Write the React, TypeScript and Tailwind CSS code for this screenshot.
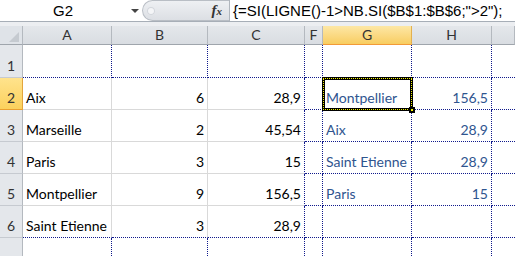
import React from "react";

const cols = ["A", "B", "C", "F", "G", "H", ""];

const data: string[][] = [
  ["", "", "", "", "", "", ""],
  ["Aix", "6", "28,9", "", "Montpellier", "156,5", ""],
  ["Marseille", "2", "45,54", "", "Aix", "28,9", ""],
  ["Paris", "3", "15", "", "Saint Etienne", "28,9", ""],
  ["Montpellier", "9", "156,5", "", "Paris", "15", ""],
  ["Saint Etienne", "3", "28,9", "", "", "", ""],
  ["", "", "", "", "", "", ""],
];

const numeric = [1, 2, 5];

function cellBorders(row: number, col: number) {
  // dotted navy lines: page-break style borders around the blocks
  const dotRight = col >= 2 || row === 1 || row === 7;
  const dotBottom = col >= 3 || row === 1 || row === 6;
  const right =
    col === 6
      ? ""
      : dotRight
        ? "border-r border-r-[#101a8c] [border-right-style:dotted]"
        : "border-r border-r-[#d9d9d9]";
  const bottom =
    row === 7
      ? ""
      : dotBottom
        ? "border-b border-b-[#101a8c] [border-bottom-style:dotted]"
        : "border-b border-b-[#d9d9d9]";
  return `${right} ${bottom}`;
}

function FormulaBar() {
  return (
    <div className="flex h-[22px] border-b border-[#a7aeb7] bg-white font-['Liberation_Sans',Arial,sans-serif]">
      <div className="flex w-[142px] items-center">
        <span className="w-[126px] text-center text-[15px] leading-none text-black">
          G2
        </span>
        <span className="ml-[5px] h-0 w-0 border-x-[4px] border-t-[4px] border-x-transparent border-t-[#444]" />
      </div>
      <div className="flex w-[87px] items-center bg-white">
        <div className="flex h-[21px] flex-1 items-center rounded-l-full border border-r-0 border-[#b9bec5] bg-gradient-to-b from-[#eef0f3] to-[#dcdfe4] pl-[4px]">
          <span className="h-[8px] w-[8px] rounded-full bg-[#f4f5f7] shadow-[inset_0_0_0_1px_#d2d6db]" />
          <span className="ml-auto mr-[7px] font-['Liberation_Serif',serif] text-[15px] font-bold italic leading-none text-[#333]">
            f<span className="text-[11px]">x</span>
          </span>
        </div>
      </div>
      <div className="flex flex-1 items-center overflow-hidden border-l border-[#b0b6bd] pl-[3px]">
        <span className="whitespace-nowrap text-[15px] leading-none text-black">
          {'{=SI(LIGNE()-1>NB.SI($B$1:$B$6;">2");'}
        </span>
      </div>
    </div>
  );
}

export default function App() {
  return (
    <div className="h-[256px] w-[515px] overflow-hidden bg-white font-['Lato','Open_Sans',sans-serif]">
      <FormulaBar />
      <div className="h-[4px] bg-[#eceef1]" />
      <div className="relative grid grid-cols-[23px_89px_96px_97px_18px_89px_80px_1fr] grid-rows-[19px_33px_32px_32px_32px_32px_32px_32px]">
        {/* corner */}
        <div className="relative border-b border-r border-b-[#9fa5ac] border-r-[#b4b9bf] bg-[#dfe3e8]">
          <span className="absolute bottom-[2px] right-[3px] h-0 w-0 border-b-[10px] border-l-[10px] border-b-[#c5cad0] border-l-transparent" />
        </div>
        {cols.map((c, i) =>
          c === "G" ? (
            <div
              key={i}
              className="flex items-center justify-center border-b border-r border-b-[#f29a38] border-r-[#e3b04f] bg-gradient-to-b from-[#fde7a4] to-[#f8cd60] text-[14px] leading-none text-[#333]"
            >
              {c}
            </div>
          ) : (
            <div
              key={i}
              className="flex items-center justify-center border-b border-r border-b-[#9fa5ac] border-r-[#b4b9bf] bg-gradient-to-b from-[#e4e7eb] to-[#d9dde2] text-[14px] leading-none text-[#333]"
            >
              {c}
            </div>
          ),
        )}
        {data.map((row, r) => (
          <React.Fragment key={r}>
            {r === 1 ? (
              <div className="flex items-end justify-center border-b border-r border-b-[#eaa030] border-r-[#e3a53c] bg-gradient-to-b from-[#ffe38c] to-[#fbd15c] pb-[2px] text-[14px] leading-[18px] text-[#333]">
                {r + 1}
              </div>
            ) : (
              <div className="flex items-end justify-center border-b border-r border-b-[#c6cad0] border-r-[#b4b9bf] bg-[#e4e7eb] pb-[2px] text-[14px] leading-[18px] text-[#333]">
                {r < 6 ? r + 1 : ""}
              </div>
            )}
            {row.map((v, c) => (
              <div
                key={c}
                className={`flex items-end overflow-visible whitespace-nowrap px-[3px] pb-[2px] text-[14px] leading-[18px] ${cellBorders(r + 1, c)} ${numeric.includes(c) ? "justify-end" : "justify-start"} ${c >= 4 ? "text-[#2f558f]" : "text-black"}`}
              >
                {v}
              </div>
            ))}
          </React.Fragment>
        ))}
        {/* copy marquee on G2 */}
        <div className="pointer-events-none absolute left-[322px] top-[51px] h-[34px] w-[91px] border-[3px] border-black">
          <div className="absolute -inset-[2px] border border-dotted border-[#f5f500]" />
        </div>
        <div className="pointer-events-none absolute left-[409px] top-[81px] flex h-[6px] w-[6px] items-center justify-center bg-black">
          <div className="h-[2px] w-[2px] bg-[#f5f500]" />
        </div>
      </div>
    </div>
  );
}
